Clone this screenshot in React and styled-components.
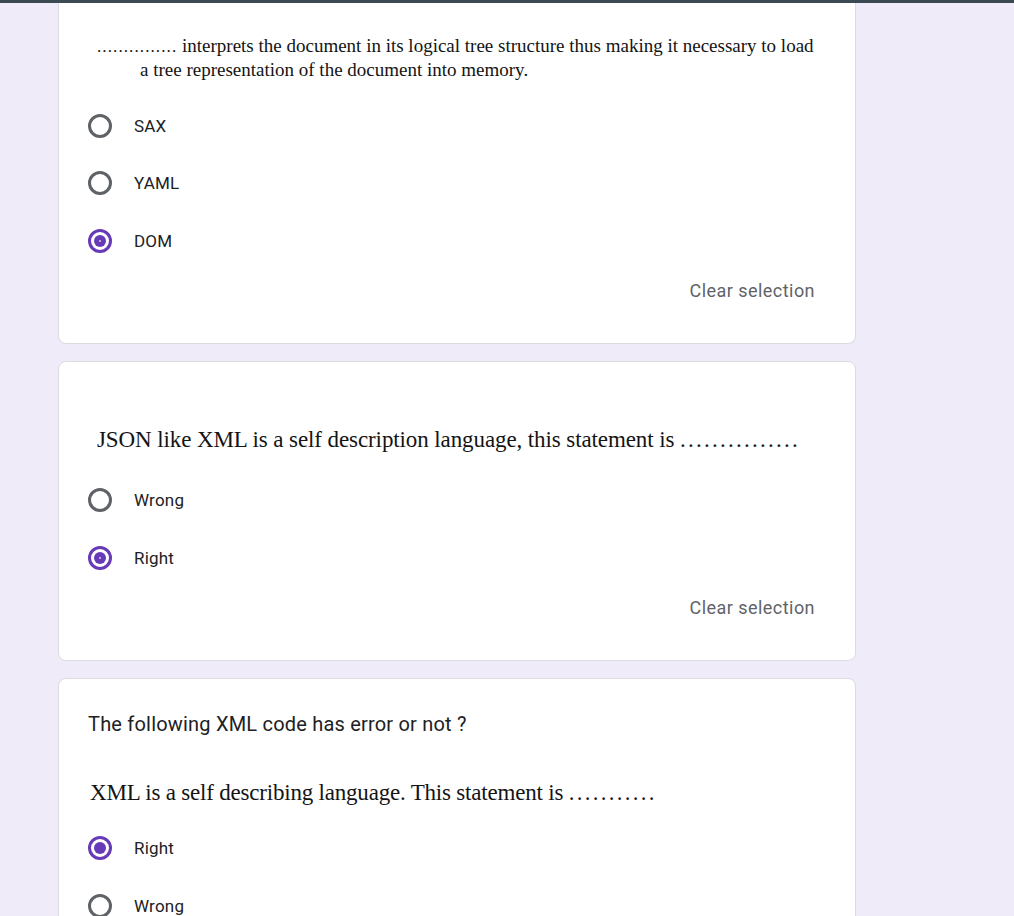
import React from "react";
import styled, { createGlobalStyle } from "styled-components";

const Global = createGlobalStyle`
  html, body { margin: 0; padding: 0; }
  body {
    background: #f0ebf8;
    font-family: Roboto, "Liberation Sans", Arial, sans-serif;
    color: #202124;
    overflow: hidden;
  }
`;

const Page = styled.div`
  height: 916px;
  overflow: hidden;
  background: #f0ebf8;
`;

const TopBar = styled.div`
  height: 3px;
  background: #3b4953;
`;

const Column = styled.main`
  width: 798px;
  margin-left: 58px;
  display: flex;
  flex-direction: column;
  gap: 17px;
`;

const Card = styled.section`
  background: #fff;
  border: 1px solid #dadce0;
  border-radius: 8px;
  padding: ${(p) => p.$top}px 40px ${(p) => p.$bottom}px 29px;
  display: flex;
  flex-direction: column;
  ${(p) =>
    p.$cut &&
    `
    border-top: none;
    border-top-left-radius: 0;
    border-top-right-radius: 0;
  `}
`;

const ScanText = styled.div`
  font-family: "Liberation Serif", "Times New Roman", serif;
  color: #141414;
  font-size: ${(p) => p.$size}px;
  line-height: ${(p) => p.$lh}px;
  letter-spacing: ${(p) => p.$ls}px;
  padding-left: ${(p) => p.$indent}px;
  margin-top: ${(p) => p.$mt || 0}px;
  white-space: nowrap;
`;

const ScanLine = styled.div`
  padding-left: ${(p) => p.$indent || 0}px;
`;

const Dots = styled.span`
  letter-spacing: ${(p) => p.$ls}px;
  font-size: ${(p) => p.$size}px;
`;

const Title = styled.div`
  font-size: 20px;
  line-height: 24px;
  letter-spacing: 0.2px;
  color: #202124;
`;

const Options = styled.div`
  display: flex;
  flex-direction: column;
  margin-top: ${(p) => p.$mt}px;
`;

const OptionRow = styled.label`
  height: ${(p) => p.$h}px;
  display: flex;
  align-items: center;
  gap: 22px;
  font-size: 17px;
  letter-spacing: 0.2px;
  color: #202124;
`;

const Radio = styled.span`
  width: 24px;
  height: 24px;
  box-sizing: border-box;
  border-radius: 50%;
  border: 3px solid ${(p) => (p.$checked ? "#673ab7" : "#5f6368")};
  display: flex;
  align-items: center;
  justify-content: center;
  flex: none;
`;

const RadioDot = styled.span`
  width: 12px;
  height: 12px;
  border-radius: 50%;
  background: #673ab7;
  display: flex;
  align-items: center;
  justify-content: center;
  &::after {
    content: "";
    width: 2px;
    height: 2px;
    border-radius: 50%;
    background: ${(p) => (p.$hollow ? "#d9cdef" : "transparent")};
  }
`;

const ClearRow = styled.div`
  margin-top: 9px;
  display: flex;
  justify-content: flex-end;
`;

const ClearButton = styled.button`
  border: none;
  background: none;
  padding: 0;
  font-family: Roboto, "Liberation Sans", Arial, sans-serif;
  font-size: 18px;
  line-height: 24px;
  letter-spacing: 0.45px;
  color: #5f6368;
  cursor: pointer;
`;

function Option({ label, checked, hollow, h = 58 }) {
  return (
    <OptionRow $h={h}>
      <Radio $checked={checked}>{checked && <RadioDot $hollow={hollow} />}</Radio>
      {label}
    </OptionRow>
  );
}

export default function App() {
  return (
    <Page>
      <Global />
      <TopBar />
      <Column>
        <Card $cut $top={31} $bottom={40}>
          <ScanText $size={19} $lh={23} $ls={0} $indent={9}>
            <ScanLine>
              <Dots $size={17} $ls={1.1}>...............</Dots>{" "}
              interprets the document in its logical tree structure thus making it necessary to load
            </ScanLine>
            <ScanLine $indent={43}>a tree representation of the document into memory.</ScanLine>
          </ScanText>
          <Options $mt={16}>
            <Option label="SAX" h={57.5} />
            <Option label="YAML" h={57.5} />
            <Option label="DOM" checked hollow h={57.5} />
          </Options>
          <ClearRow>
            <ClearButton>Clear selection</ClearButton>
          </ClearRow>
        </Card>

        <Card $top={64} $bottom={40}>
          <ScanText $size={23} $lh={28} $ls={-0.1} $indent={9}>
            JSON like XML is a self description language, this statement is{" "}
            <Dots $size={23} $ls={2.25}>...............</Dots>
          </ScanText>
          <Options $mt={17}>
            <Option label="Wrong" />
            <Option label="Right" checked hollow />
          </Options>
          <ClearRow>
            <ClearButton>Clear selection</ClearButton>
          </ClearRow>
        </Card>

        <Card $top={33} $bottom={60}>
          <Title>The following XML code has error or not ?</Title>
          <ScanText $size={23} $lh={28} $ls={-0.2} $indent={2} $mt={43}>
            XML is a self describing language. This statement is{" "}
            <Dots $size={23} $ls={2.25}>...........</Dots>
          </ScanText>
          <Options $mt={12}>
            <Option label="Right" checked />
            <Option label="Wrong" />
          </Options>
        </Card>
      </Column>
    </Page>
  );
}
